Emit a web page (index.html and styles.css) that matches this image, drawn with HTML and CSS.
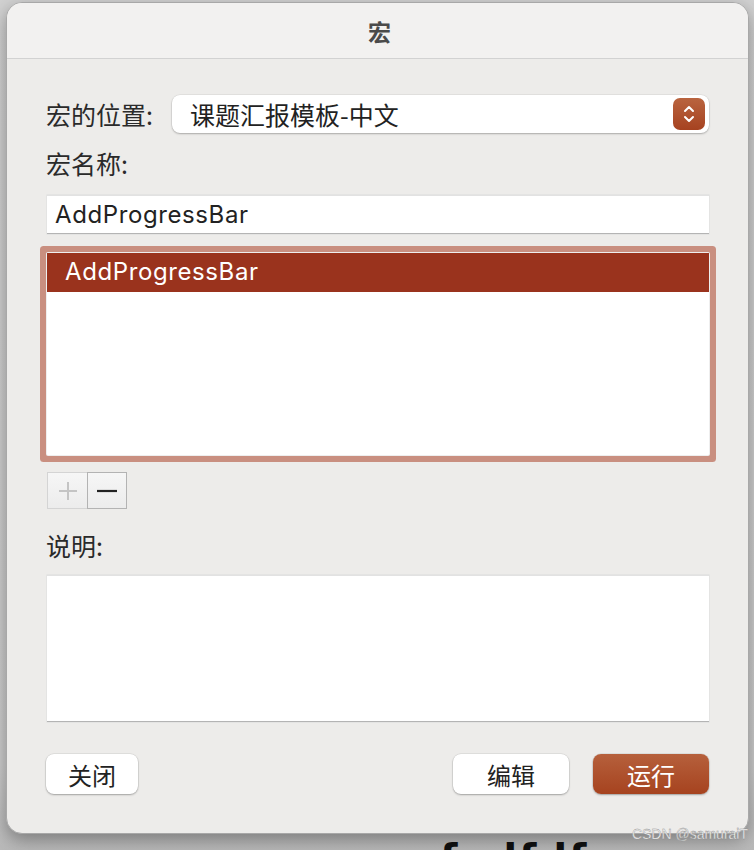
FILE: index.html
```html
<!DOCTYPE html>
<html lang="zh-CN">
<head>
<meta charset="UTF-8">
<meta name="viewport" content="width=device-width, initial-scale=1.0">
<title>宏</title>
<link rel="stylesheet" href="styles.css">
</head>
<body>
<div class="backdrop-text">fadfdf</div>
<div class="window">
<div class="titlebar">宏</div>
<div class="content">
<div class="location-row">
<span class="label">宏的位置:</span>
<div class="popup">
<span class="popup-text">课题汇报模板-中文</span>
<span class="stepper">
<svg width="14" height="22" viewBox="0 0 14 22">
<path d="M3 8 L7 4 L11 8" fill="none" stroke="#fff" stroke-width="2" stroke-linecap="round" stroke-linejoin="round"/>
<path d="M3 14 L7 18 L11 14" fill="none" stroke="#fff" stroke-width="2" stroke-linecap="round" stroke-linejoin="round"/>
</svg>
</span>
</div>
</div>
<div class="label name-label">宏名称:</div>
<div class="text-field">AddProgressBar</div>
<div class="macro-list">
<div class="list-row selected">AddProgressBar</div>
</div>
<div class="plus-minus">
<span class="pm-btn disabled">
<svg width="20" height="20" viewBox="0 0 20 20"><path d="M10 1 V19 M1 10 H19" stroke="#c4c4c4" stroke-width="2"/></svg>
</span>
<span class="pm-btn">
<svg width="22" height="20" viewBox="0 0 22 20"><path d="M1 10 H21" stroke="#222" stroke-width="2.2"/></svg>
</span>
</div>
<div class="label desc-label">说明:</div>
<div class="desc-box"></div>
<div class="button-row">
<button class="btn">关闭</button>
<div class="spacer"></div>
<button class="btn btn-wide">编辑</button>
<button class="btn btn-wide btn-primary">运行</button>
</div>
</div>
</div>
<div class="watermark">CSDN @samuraiT</div>
</body>
</html>
```
FILE: styles.css
```css
html, body {
margin: 0;
padding: 0;
}
body {
width: 754px;
height: 850px;
overflow: hidden;
position: relative;
background: linear-gradient(to bottom, #d2d2d2 0%, #cdcdcd 90%, #b9b9b9 100%);
font-family: "Inter", "Noto Sans CJK SC", sans-serif;
color: #2a2a2a;
}
.window {
position: relative;
margin: 2px 0 0 6px;
width: 741px;
height: 830px;
background-color: #edecea;
border: 1px solid #a8a8a8;
border-radius: 16px;
box-shadow: 0 6px 18px rgba(0, 0, 0, 0.35);
overflow: hidden;
}
.titlebar {
height: 55px;
background-color: #f2f1f0;
border-bottom: 1px solid #d2d2d2;
display: flex;
align-items: center;
justify-content: center;
font-family: "Noto Sans CJK SC", sans-serif;
font-weight: bold;
font-size: 23px;
color: #4a4a4a;
padding-left: 4px;
}
.content {
padding: 36px 39px 0 40px;
}
.label {
font-family: "Noto Sans CJK SC", sans-serif;
font-size: 25px;
line-height: 30px;
color: #2a2a2a;
margin-left: -1px;
}
.location-row {
display: flex;
align-items: center;
height: 38px;
}
.location-row .label {
width: 126px;
flex-shrink: 0;
}
.popup {
flex: 1;
height: 38px;
background-color: #fff;
border-radius: 8px;
box-shadow: 0 1px 2px rgba(0, 0, 0, 0.25), 0 0 0 0.5px rgba(0, 0, 0, 0.08);
display: flex;
align-items: center;
justify-content: space-between;
padding: 0 4px 0 18px;
}
.popup-text {
font-family: "Noto Sans CJK SC", sans-serif;
font-size: 25px;
color: #222;
}
.stepper {
width: 32px;
height: 32px;
border-radius: 7px;
background: linear-gradient(to bottom, #b9643f, #a64220);
display: flex;
align-items: center;
justify-content: center;
}
.name-label {
margin-top: 15px;
}
.text-field {
margin-top: 17px;
height: 39px;
box-sizing: border-box;
background-color: #fff;
border-top: 1px solid #e2e2e2;
border-bottom: 1px solid #b4b4b4;
box-shadow: 0 0 0 0.5px #dcdcdc;
font-size: 24px;
letter-spacing: 0.6px;
line-height: 37px;
padding-left: 8px;
color: #222;
}
.macro-list {
margin-top: 19px;
height: 202px;
background-color: #fff;
border-radius: 1px;
box-shadow: 0 0 0 1px #eee, 0 0 0 7px #c98f80;
}
.list-row {
height: 39px;
line-height: 38px;
padding-left: 18px;
font-size: 24px;
letter-spacing: 0.6px;
}
.list-row.selected {
background-color: #9a331d;
color: #fff;
}
.plus-minus {
margin-top: 17px;
display: flex;
}
.pm-btn {
width: 38px;
height: 35px;
border: 1px solid #b3b3b3;
background: linear-gradient(to bottom, #f6f6f6, #ececec);
display: flex;
align-items: center;
justify-content: center;
}
.pm-btn.disabled {
width: 39px;
border-color: #d4d4d4;
border-right: none;
}
.pm-btn + .pm-btn {
border-left: 1px solid #b3b3b3;
}
.desc-label {
margin-top: 21px;
}
.desc-box {
margin-top: 15px;
height: 147px;
box-sizing: border-box;
background-color: #fff;
border-top: 1px solid #e2e2e2;
border-bottom: 1px solid #b4b4b4;
box-shadow: 0 0 0 0.5px #dcdcdc;
}
.button-row {
margin-top: 32px;
display: flex;
align-items: center;
gap: 24px;
margin-left: -1px;
}
.spacer {
flex: 1;
}
.btn {
height: 40px;
width: 92px;
border: none;
border-radius: 8px;
background-color: #fff;
box-shadow: 0 1px 2px rgba(0, 0, 0, 0.28), 0 0 0 0.5px rgba(0, 0, 0, 0.1);
font-family: "Noto Sans CJK SC", sans-serif;
font-size: 24px;
color: #222;
padding: 0;
}
.btn-wide {
width: 116px;
}
.btn-primary {
background: linear-gradient(to bottom, #b6603c, #a6431f);
color: #fff;
}
.backdrop-text {
position: absolute;
left: 440px;
top: 836px;
font-family: "DejaVu Sans", sans-serif;
font-weight: bold;
font-size: 40px;
color: #111;
letter-spacing: 2px;
}
.watermark {
position: absolute;
right: 6px;
top: 826px;
font-family: "Liberation Sans", sans-serif;
font-size: 14px;
color: #fff;
-webkit-text-stroke: 0.4px #8a8a8a;
}
```
